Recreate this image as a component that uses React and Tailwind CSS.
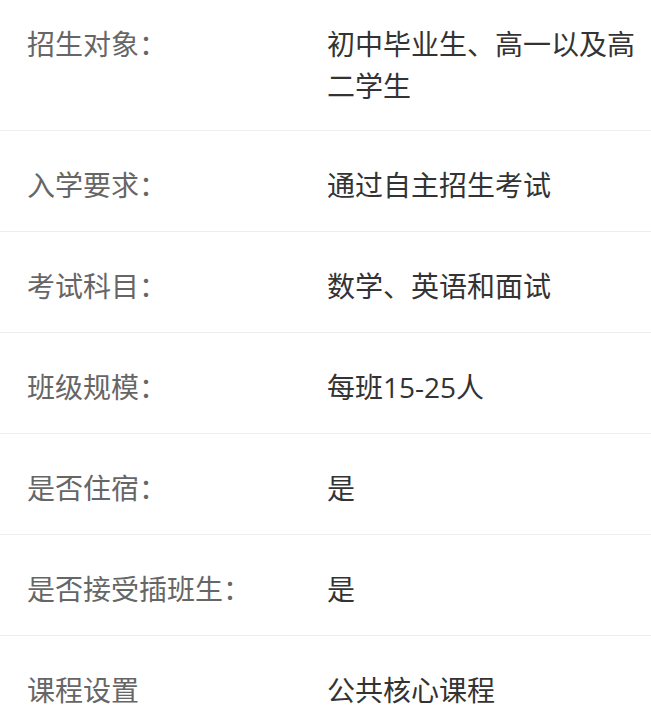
const ROWS = [
  { label: '招生对象：', value: '初中毕业生、高一以及高二学生' },
  { label: '入学要求：', value: '通过自主招生考试' },
  { label: '考试科目：', value: '数学、英语和面试' },
  { label: '班级规模：', value: '每班15-25人' },
  { label: '是否住宿：', value: '是' },
  { label: '是否接受插班生：', value: '是' },
  { label: '课程设置', value: '公共核心课程' },
];

export default function App() {
  return (
    <div
      className="min-h-screen bg-white text-[28px] leading-[42px]"
      style={{ fontFamily: '"Open Sans", "Noto Sans CJK SC", sans-serif' }}
    >
      {ROWS.map((row, i) => (
        <div
          key={i}
          className={`flex items-start border-b border-[#eeeeee] pl-[27px] pr-[10px] ${
            i === 0 ? 'pt-[23px] pb-[23px]' : 'pt-[33px] pb-[25px]'
          }`}
        >
          <div className="w-[300px] shrink-0 text-[#666666]">{row.label}</div>
          <div className="flex-1 text-[#333333]">{row.value}</div>
        </div>
      ))}
    </div>
  );
}
